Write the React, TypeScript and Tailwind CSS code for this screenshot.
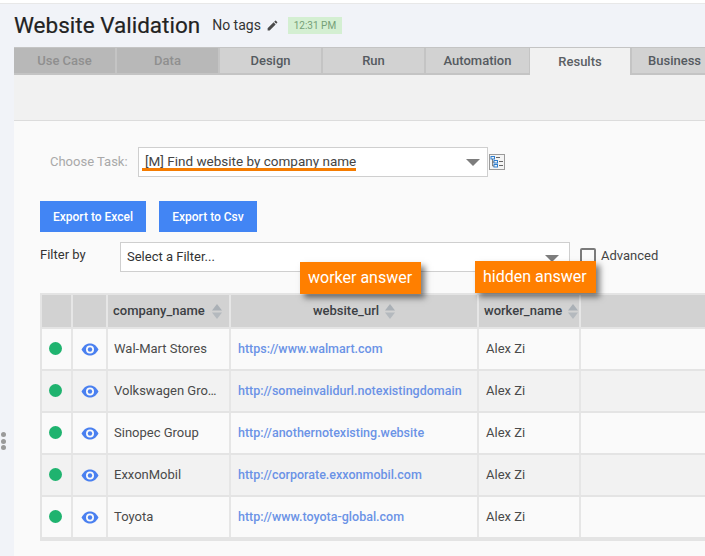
import React from "react";

const tabs = [
  { label: "Use Case", w: "w-[103px]", cls: "bg-[#b8b8b8] text-[#8f8f8f] border-r-2 border-r-[#c4c4c4]" },
  { label: "Data", w: "w-[103px]", cls: "bg-[#b8b8b8] text-[#8f8f8f] border-r-2 border-r-[#c4c4c4]" },
  { label: "Design", w: "w-[103px]", cls: "bg-[#d2d2d2] text-[#555a60] border-r-2 border-r-[#c4c4c4]" },
  { label: "Run", w: "w-[103px]", cls: "bg-[#d2d2d2] text-[#555a60] border-r-2 border-r-[#c4c4c4]" },
  { label: "Automation", w: "w-[103px]", cls: "bg-[#d2d2d2] text-[#555a60]" },
];

const rows = [
  ["Wal-Mart Stores", "https://www.walmart.com"],
  ["Volkswagen Gro…", "http://someinvalidurl.notexistingdomain"],
  ["Sinopec Group", "http://anothernotexisting.website"],
  ["ExxonMobil", "http://corporate.exxonmobil.com"],
  ["Toyota", "http://www.toyota-global.com"],
];

function Caret() {
  return <div className="w-0 h-0 border-l-[7px] border-r-[7px] border-t-[7px] border-l-transparent border-r-transparent border-t-[#7d7d7d]" />;
}

function Sort() {
  return (
    <svg width="10" height="15" viewBox="0 0 10 15" className="shrink-0">
      <path d="M5 0 L10 6.5 H0 Z" fill="#aab0b6" />
      <path d="M5 15 L10 8.5 H0 Z" fill="#b4b9be" />
    </svg>
  );
}

function Eye() {
  return (
    <svg width="18" height="13" viewBox="0 0 18 13">
      <path d="M0.5 6.5 C3 2 6 0.5 9 0.5 C12 0.5 15 2 17.5 6.5 C15 11 12 12.5 9 12.5 C6 12.5 3 11 0.5 6.5 Z" fill="#4a80f0" />
      <circle cx="9" cy="6.5" r="4" fill="#fafafa" />
      <circle cx="9" cy="6.5" r="2.2" fill="#4a80f0" />
    </svg>
  );
}

function TaskIcon() {
  return (
    <svg width="16" height="16" viewBox="0 0 16 16">
      <rect x="0.5" y="0.5" width="15" height="15" fill="#f4f4f4" stroke="#9a9a9a" />
      <rect x="2" y="2.5" width="3.5" height="2.5" fill="none" stroke="#2f7fd0" />
      <rect x="5" y="6.5" width="3.5" height="2.5" fill="none" stroke="#2f7fd0" />
      <rect x="5" y="10.5" width="3.5" height="2.5" fill="none" stroke="#2f7fd0" />
      <path d="M3.5 5 V12 H5 M3.5 8 H5" stroke="#555" fill="none" strokeWidth="0.7" />
      <path d="M7 3.5 H11 M10 7.5 H14 M10 11.5 H14" stroke="#666" strokeWidth="1" />
    </svg>
  );
}

export default function App() {
  return (
    <div className="relative w-[705px] h-[556px] overflow-hidden bg-[#f1f3f8] font-['Roboto',sans-serif] text-[#333]">
      <div className="h-[4px] bg-white border-b border-b-[#e8e8e8]" />
      <div className="h-[43px] pl-[14px] flex items-center">
        <span className="text-[22.5px] leading-none text-[#222] relative top-[0px] font-normal [-webkit-text-stroke:0.2px_#222]">Website Validation</span>
        <span className="ml-[12px] text-[14px] text-[#333]">No tags</span>
        <svg width="13" height="13" viewBox="0 0 24 24" className="ml-[5px]" fill="#4a4a4a">
          <path d="M3 17.25V21h3.75L17.81 9.94l-3.75-3.75L3 17.25zM20.71 7.04a1 1 0 0 0 0-1.41l-2.34-2.34a1 1 0 0 0-1.41 0l-1.83 1.83 3.75 3.75 1.83-1.83z" />
        </svg>
        <span className="ml-[9px] h-[17px] w-[54px] bg-[#d4efd2] text-[#75a077] text-[10px] flex items-center justify-center">12:31 PM</span>
      </div>

      <div className="ml-[14px] flex flex-col">
        <div className="flex h-[28px] border-t border-t-[#c4c4c4] w-[691px] overflow-hidden text-[13px] font-medium">
          {tabs.map((t) => (
            <div key={t.label} className={`${t.w} shrink-0 flex items-center justify-center border-b-2 border-b-[#c4c4c4] ${t.cls}`}>
              {t.label}
            </div>
          ))}
          <div className="w-[103px] shrink-0 flex items-center justify-center bg-[#f1f1f1] text-[#5b5f64] border-l border-l-[#c4c4c4] border-r-2 border-r-[#c4c4c4]">
            Results
          </div>
          <div className="flex-1 pl-[16px] flex items-center whitespace-nowrap bg-[#d2d2d2] text-[#555a60] border-b-2 border-b-[#c4c4c4]">
            Business
          </div>
        </div>
        <div className="h-[46px] bg-[#f1f1f1] border-b border-b-[#dcdcdc]" />
        <div className="h-[435px] bg-[#fafafa] pl-[26px]">
          <div className="flex items-center pt-[25px] h-[56px]">
            <span className="ml-[10px] w-[88px] text-[13px] text-[#a9a9a9]">Choose Task:</span>
            <div className="relative w-[350px] h-[30px] bg-white border border-[#cfcfcf] flex items-center pl-[6px] text-[13.5px] text-[#444]">
              <span className="relative">
                [M] Find website by company name
                <span className="absolute left-[-3px] right-0 top-[17px] h-[3px] bg-[#f57c00]" />
              </span>
              <div className="absolute right-[7px] top-[11px]"><Caret /></div>
            </div>
            <div className="ml-[1px]"><TaskIcon /></div>
          </div>
          <div className="flex gap-[13px] mt-[24px]">
            <div className="w-[106px] h-[31px] bg-[#4285f4] text-white text-[12px] font-medium flex items-center justify-center">Export to Excel</div>
            <div className="w-[98px] h-[31px] bg-[#4285f4] text-white text-[12px] font-medium flex items-center justify-center">Export to Csv</div>
          </div>
          <div className="flex items-center mt-[10px] h-[30px]">
            <span className="w-[80px] text-[13px] text-[#333] relative top-[-2px]">Filter by</span>
            <div className="relative w-[450px] h-[30px] bg-white border border-[#cfcfcf] flex items-center pl-[6px] text-[13px] text-[#333]">
              Select a Filter...
              <div className="absolute right-[10px] top-[12px]"><Caret /></div>
            </div>
            <div className="ml-[10px] w-[16px] h-[16px] border-2 border-[#7a7a7a] rounded-[2px] relative top-[-1px]" />
            <span className="ml-[5px] text-[13px] text-[#444] relative top-[-1px]">Advanced</span>
          </div>
          <div className="mt-[21px] w-[665px] border-2 border-[#e4e4e4] border-r-0 bg-[#fafafa] text-[13px]">
            <div className="flex h-[32px] bg-[#d2d2d2] text-[#3c3f44] font-medium text-[13px] border-b-0">
              <div className="w-[31px] border-r-2 border-r-[#e6e6e6]" />
              <div className="w-[35px] border-r-2 border-r-[#e6e6e6]" />
              <div className="w-[123px] border-r-2 border-r-[#e6e6e6] flex items-center pl-[5px] gap-[7px] whitespace-nowrap">company_name<Sort /></div>
              <div className="w-[248px] border-r-2 border-r-[#e6e6e6] flex items-center justify-center gap-[6px]">website_url<Sort /></div>
              <div className="w-[102px] border-r-2 border-r-[#e6e6e6] flex items-center pl-[5px] gap-[6px] whitespace-nowrap">worker_name<Sort /></div>
              <div className="flex-1" />
            </div>
            <div className="h-[2px] bg-[#e4e4e4]" />
            {rows.map(([name, url], i) => (
              <div key={name} className={`flex h-[42px] border-b-2 border-b-[#e4e4e4] ${i % 2 === 1 ? "bg-[#f2f2f2]" : "bg-[#fafafa]"}`}>
                <div className="w-[31px] border-r-2 border-r-[#e6e6e6] flex items-center pl-[7px]">
                  <div className="w-[13px] h-[13px] rounded-full bg-[#1fb36f] relative top-[-1px]" />
                </div>
                <div className="w-[35px] border-r-2 border-r-[#e6e6e6] flex items-center pl-[8px]"><Eye /></div>
                <div className="w-[123px] border-r-2 border-r-[#e6e6e6] flex items-center pl-[6px] text-[#4a4a4a] whitespace-nowrap">{name}</div>
                <div className="w-[248px] border-r-2 border-r-[#e6e6e6] flex items-center pl-[7px] text-[#6b93e6] font-medium whitespace-nowrap text-[12.5px]">{url}</div>
                <div className="w-[102px] border-r-2 border-r-[#e6e6e6] flex items-center pl-[7px] text-[#4a4a4a]">Alex Zi</div>
                <div className="flex-1" />
              </div>
            ))}
          </div>
        </div>
      </div>

      <div className="absolute left-[300px] top-[262px] w-[121px] h-[32px] bg-[#ff7f00] text-white text-[16px] flex items-center pl-[8px] shadow-[4px_4px_6px_rgba(0,0,0,0.5)]">worker answer</div>
      <div className="absolute left-[475px] top-[261px] w-[121px] h-[32px] bg-[#ff7f00] text-white text-[16px] flex items-center pl-[8px] shadow-[4px_4px_6px_rgba(0,0,0,0.5)]">hidden answer</div>

      <div className="absolute left-[1px] top-[432px] flex flex-col gap-[1.5px]">
        <div className="w-[5px] h-[5px] rounded-full bg-[#9a9a9a]" />
        <div className="w-[5px] h-[5px] rounded-full bg-[#9a9a9a]" />
        <div className="w-[5px] h-[5px] rounded-full bg-[#9a9a9a]" />
      </div>
    </div>
  );
}
